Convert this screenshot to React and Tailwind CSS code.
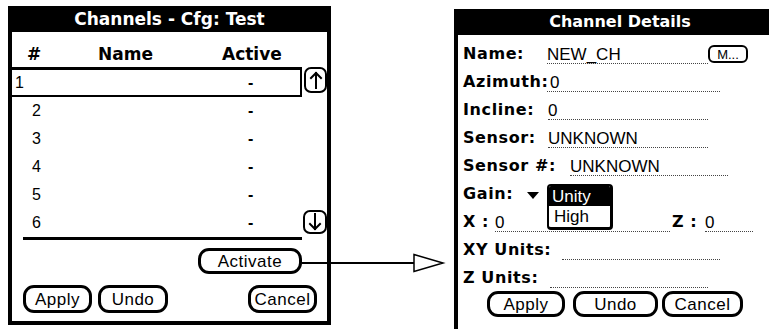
import React from "react";

const BOLD = "font-['DejaVu_Sans',sans-serif] font-bold";
const REG = "font-['Liberation_Sans',Arial,sans-serif]";

function PalmButton({ children, className = "" }) {
  return (
    <div
      className={`flex items-center justify-center border-[3px] border-black rounded-[11px] bg-white text-[17px] leading-none tracking-[0.5px] font-['Liberation_Sans',Arial,sans-serif] ${className}`}
    >
      {children}
    </div>
  );
}

function ScrollArrow({ up, className = "" }) {
  return (
    <div className={`border-2 border-black rounded-[7px] bg-white flex items-center justify-center ${className}`}>
      <svg width="16" height="18" viewBox="0 0 16 18">
        {up ? (
          <g stroke="black" strokeWidth="2" fill="none" strokeLinecap="square">
            <line x1="8" y1="2" x2="8" y2="17" />
            <polyline points="3,7 8,2 13,7" />
          </g>
        ) : (
          <g stroke="black" strokeWidth="2" fill="none" strokeLinecap="square">
            <line x1="8" y1="1" x2="8" y2="16" />
            <polyline points="3,11 8,16 13,11" />
          </g>
        )}
      </svg>
    </div>
  );
}

function Field({ children, className = "" }) {
  return (
    <div
      className={`shrink-0 h-[18px] leading-[17px] border-b border-dotted border-[#444] text-[17px] font-['Liberation_Sans',Arial,sans-serif] whitespace-nowrap ${className}`}
    >
      {children}
    </div>
  );
}

function Label({ children, className = "" }) {
  return (
    <div className={`shrink-0 text-[16px] leading-none tracking-[0.6px] whitespace-nowrap font-['DejaVu_Sans',sans-serif] font-bold ${className}`}>
      {children}
    </div>
  );
}

export default function App() {
  const rowNums = ["2", "3", "4", "5", "6"];
  return (
    <div className="relative w-[769px] h-[329px] bg-white overflow-hidden flex items-start text-black">
      {/* Left window */}
      <div className="flex flex-col w-[323px] mt-[6px] ml-[8px] shrink-0">
        <div className={`h-[26px] bg-black text-white flex items-center justify-center text-[17px] leading-none ${BOLD}`}>
          Channels - Cfg: Test
        </div>
        <div className="h-[293px] border-x-4 border-b-4 border-black flex flex-col">
          <div className={`h-[35px] pt-[9px] flex items-center text-[17px] leading-none ${BOLD}`}>
            <span className="ml-[15px] w-[71px]">#</span>
            <span className="w-[124px]">Name</span>
            <span>Active</span>
          </div>
          <div className="flex h-[173px]">
            <div className={`w-[290px] flex flex-col text-[16px] leading-none ${REG}`}>
              <div className="-ml-[2px] h-[30px] border-2 border-t-[3px] border-black flex items-center">
                <span className="ml-[3px] w-[233px]">1</span>
                <span className="font-bold">-</span>
              </div>
              {rowNums.map((n) => (
                <div key={n} className="h-[28px] flex items-center pl-[20px]">
                  <span className="w-[216px]">{n}</span>
                  <span className="font-bold">-</span>
                </div>
              ))}
              <div className="ml-[11px] h-[3px] bg-black" />
            </div>
            <div className="w-[25px] flex flex-col justify-between pb-[6px]">
              <ScrollArrow up className="ml-[2px] w-[23px] h-[26px]" />
              <ScrollArrow className="ml-[1px] w-[24px] h-[24px]" />
            </div>
          </div>
          <div className="flex mt-[8px]">
            <PalmButton className="ml-[186px] w-[104px] h-[26px]">Activate</PalmButton>
          </div>
          <div className="flex mt-[11px] h-[28px]">
            <PalmButton className="ml-[11px] w-[69px] h-[28px]">Apply</PalmButton>
            <PalmButton className="ml-[6px] w-[70px] h-[28px]">Undo</PalmButton>
            <PalmButton className="ml-auto mr-[10px] w-[69px] h-[28px]">Cancel</PalmButton>
          </div>
        </div>
      </div>

      {/* Right window */}
      <div className="flex flex-col w-[332px] mt-[9px] ml-[123px] shrink-0">
        <div className={`h-[26px] bg-black text-white flex items-center justify-center text-[16px] leading-none ${BOLD}`}>
          Channel Details
        </div>
        <div className="h-[300px] border-l-4 border-black pl-[5px] pt-[5px] flex flex-col">
          <div className="h-[28px] flex items-center">
            <Label className="w-[84px]">Name:</Label>
            <Field className="w-[161px] mt-[2px]">NEW_CH</Field>
            <div className={`w-[40px] h-[18px] border-2 border-black rounded-[6px] flex items-center justify-center text-[13px] leading-none ${REG}`}>
              M...
            </div>
          </div>
          <div className="h-[28px] flex items-center">
            <Label className="w-[84px] tracking-[0.2px]">Azimuth:</Label>
            <Field className="w-[173px] mt-[2px] pl-[3px]">0</Field>
          </div>
          <div className="h-[28px] flex items-center">
            <Label className="w-[85px]">Incline:</Label>
            <Field className="w-[160px] mt-[2px]">0</Field>
          </div>
          <div className="h-[28px] flex items-center">
            <Label className="w-[85px]">Sensor:</Label>
            <Field className="w-[160px] mt-[2px]">UNKNOWN</Field>
          </div>
          <div className="h-[28px] flex items-center">
            <Label className="w-[107px]">Sensor #:</Label>
            <Field className="w-[158px] mt-[2px]">UNKNOWN</Field>
          </div>
          <div className="relative h-[28px] flex items-center">
            <Label className="w-[64px]">Gain:</Label>
            <svg width="12" height="7" viewBox="0 0 12 7" className="mt-[3px]">
              <polygon points="0,0 12,0 6,7" fill="black" />
            </svg>
            <div className="absolute z-10 left-[84px] top-[4px] w-[66px] h-[46px] bg-white border-2 border-r-[3px] border-b-[3px] border-black rounded-[4px] overflow-hidden flex flex-col">
              <div className={`h-[20px] bg-black text-white text-[17px] leading-none flex items-center pl-[3px] ${REG}`}>
                Unity
              </div>
              <div className={`flex-1 text-[17px] leading-none flex items-center pl-[5px] ${REG}`}>High</div>
            </div>
          </div>
          <div className="h-[28px] flex items-center">
            <Label className="w-[32px]">X :</Label>
            <Field className="w-[175px] mt-[2px]">0</Field>
            <Label className="ml-[2px] w-[33px]">Z :</Label>
            <Field className="w-[48px] mt-[2px]">0</Field>
          </div>
          <div className="h-[28px] flex items-center">
            <Label className="w-[99px]">XY Units:</Label>
            <Field className="w-[158px] mt-[2px]"></Field>
          </div>
          <div className="h-[28px] flex items-center">
            <Label className="w-[87px]">Z Units:</Label>
            <Field className="w-[158px] mt-[2px]"></Field>
          </div>
          <div className="flex h-[26px] mt-[-1px]">
            <PalmButton className="ml-[24px] w-[78px] h-[26px]">Apply</PalmButton>
            <PalmButton className="ml-[8px] w-[85px] h-[26px]">Undo</PalmButton>
            <PalmButton className="ml-[4px] w-[81px] h-[26px]">Cancel</PalmButton>
          </div>
        </div>
      </div>

      {/* Connector arrow */}
      <svg className="absolute left-[302px] top-[252px]" width="145" height="22" viewBox="0 0 145 22">
        <line x1="0" y1="11" x2="113" y2="11" stroke="black" strokeWidth="2" />
        <polygon points="112,2.5 141,11 112,19.5" fill="white" stroke="black" strokeWidth="1.5" />
      </svg>
    </div>
  );
}
